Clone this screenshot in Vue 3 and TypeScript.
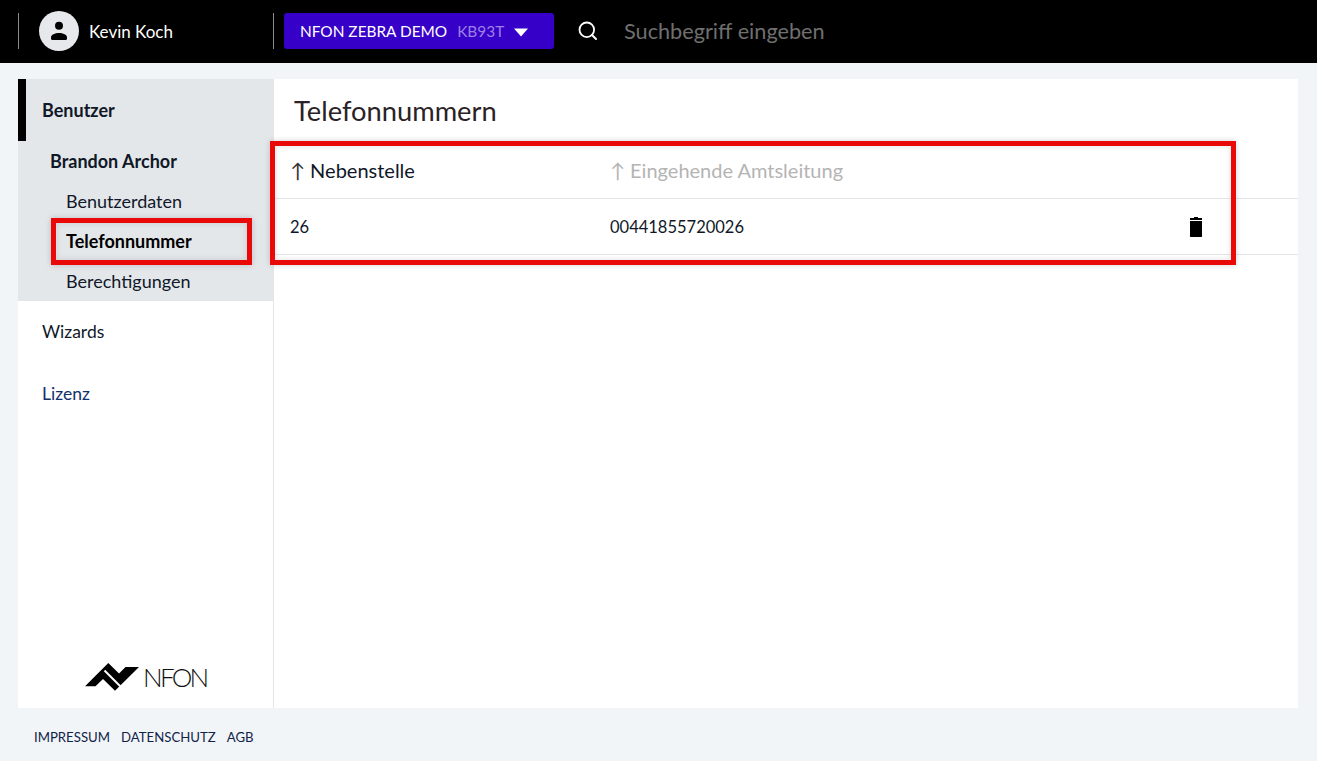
<script setup lang="ts">
const subItems: { label: string; active?: boolean }[] = [
  { label: 'Benutzerdaten' },
  { label: 'Telefonnummer', active: true },
  { label: 'Berechtigungen' },
]
const footerLinks: string[] = ['IMPRESSUM', 'DATENSCHUTZ', 'AGB']
</script>

<template>
  <div class="page">
    <header class="topbar">
      <div class="divider first"></div>
      <div class="avatar">
        <svg viewBox="0 0 24 24" width="24" height="24"><circle cx="12" cy="6.800" r="4" fill="#000"/><path fill="#000" d="M4 19.500v-1c0-3 4-4.500 8-4.500s8 1.500 8 4.500v1a1.500 1.500 0 0 1-1.500 1.500h-13A1.500 1.500 0 0 1 4 19.500z"/></svg>
      </div>
      <span class="username">Kevin Koch</span>
      <div class="divider second"></div>
      <button class="tenant">
        <span class="tenant-name">NFON ZEBRA DEMO</span>
        <span class="tenant-code">KB93T</span>
        <svg class="caret" viewBox="0 0 14 9" width="14" height="9"><path fill="#fff" d="M0 0.500h14L7 8.500z"/></svg>
      </button>
      <svg class="search" viewBox="0 0 20 20" width="20" height="20"><circle cx="8.800" cy="8.800" r="7.300" fill="none" stroke="#fff" stroke-width="1.800"/><path d="M14 14l4 4" stroke="#fff" stroke-width="2" stroke-linecap="round"/></svg>
      <span class="search-text">Suchbegriff eingeben</span>
    </header>

    <main class="panel">
      <aside class="sidebar">
        <div class="section">
          <div class="nav-top active">Benutzer</div>
          <div class="nav-user">Brandon Archor</div>
          <div v-for="item in subItems" :key="item.label" class="nav-sub" :class="{ on: item.active }">{{ item.label }}</div>
        </div>
        <div class="nav-top">Wizards</div>
        <div class="nav-top lizenz">Lizenz</div>
        <div class="logo">
          <svg viewBox="0 0 54 28" width="54" height="28">
            <path fill="#000" d="M0 23.300L23.300 0 34 10.500 40.500 4H54L30 27.700 18 16 10.500 23.300z"/>
            <path d="M19.500 7.500L35.500 23.500" stroke="#fff" stroke-width="2"/>
          </svg>
          <span class="logo-text">NFON</span>
        </div>
      </aside>
      <section class="content">
        <h1 class="title">Telefonnummern</h1>
        <div class="row head">
          <div class="col c1"><span class="arrow">↑</span> Nebenstelle</div>
          <div class="col c2"><span class="arrow">↑</span> Eingehende Amtsleitung</div>
        </div>
        <div class="row body">
          <div class="col c1">26</div>
          <div class="col c2">00441855720026</div>
          <svg class="trash" viewBox="0 0 12 20" width="12" height="20"><path fill="#000" d="M4 0h4v1h4v2H0V1h4zM0 4h12v15.500l-.5.5H.5l-.5-.5z"/></svg>
        </div>
      </section>
    </main>

    <footer class="footer">
      <span v-for="link in footerLinks" :key="link">{{ link }}</span>
    </footer>

    <div class="mark mark-a"></div>
    <div class="mark mark-b"></div>
  </div>
</template>

<style>
html, body { margin: 0; background: #f1f5f8; }
</style>

<style scoped>
.page {
  position: relative;
  width: 1317px;
  height: 761px;
  overflow: hidden;
  background: #f1f5f8;
  font-family: Lato, "Open Sans", sans-serif;
  color: #101828;
  display: flex;
  flex-direction: column;
}
.topbar {
  height: 63px;
  flex: none;
  box-sizing: border-box;
  padding-bottom: 1px;
  background: #000;
  display: flex;
  align-items: center;
  color: #fff;
}
.divider { width: 1px; height: 36px; background: #8a8a8a; }
.first { margin-left: 18px; }
.avatar {
  width: 40px;
  height: 40px;
  border-radius: 50%;
  background: #e6e8eb;
  display: flex;
  align-items: center;
  justify-content: center;
  margin-left: 20px;
}
.username { margin-left: 10px; font-size: 17px; width: 184px; }
.tenant {
  margin-left: 10px;
  width: 270px;
  height: 36px;
  border: 0;
  border-radius: 3px;
  background: #3700c8;
  color: #fff;
  font: inherit;
  font-size: 15.400px;
  display: flex;
  align-items: center;
  padding: 0 0 0 16px;
}
.tenant-code { margin-left: 10px; color: #9d80e6; }
.caret { margin-left: 10px; margin-top: 3px; }
.search { margin-left: 24px; }
.search-text { margin-left: 26px; font-size: 21.700px; color: #6f6f6f; }
.panel {
  margin: 16px 19px 0 18px;
  height: 629px;
  flex: none;
  background: #fff;
  display: flex;
}
.sidebar {
  width: 255px;
  border-right: 1px solid #e3e5e8;
  display: flex;
  flex-direction: column;
  flex: none;
}
.section { background: #e4e7ea; height: 222px; margin-right: -1px; }
.nav-top {
  height: 62px;
  line-height: 62px;
  padding-left: 24px;
  font-size: 17.500px;
}
.nav-top.active { font-size: 18px; font-weight: 700; border-left: 8px solid #000; padding-left: 16px; box-sizing: border-box; }
.lizenz { color: #12306e; }
.nav-user { height: 40px; line-height: 40px; padding-left: 32px; font-weight: 700; font-size: 18px; }
.nav-sub { height: 40px; line-height: 40px; padding-left: 48px; font-size: 18px; }
.nav-sub.on { font-weight: 700; color: #000; }
.logo { margin-top: auto; display: flex; align-items: center; justify-content: flex-start; gap: 4px; padding: 0 0 15px 67px; }
.logo-text { font-size: 26px; font-weight: 300; color: #111; letter-spacing: -2.700px; }
.content { flex: 1; min-width: 0; }
.title { margin: 0; height: 63px; line-height: 63px; padding-left: 20px; font-size: 27.300px; font-weight: 400; color: #2a2226; }
.row { display: flex; align-items: center; position: relative; border-bottom: 1px solid #e3e5e8; box-sizing: border-box; }
.head { height: 57px; font-size: 20px; }
.body { height: 56px; font-size: 16.500px; }
.col { flex: none; }
.c1 { width: 336px; padding-left: 16px; box-sizing: border-box; }
.head .c2 { color: #b4b4b4; }
.arrow { color: #333; }
.head .c2 .arrow { color: #b4b4b4; }
.trash { position: absolute; left: 916px; top: 18px; }
.footer {
  height: 53px;
  flex: none;
  box-sizing: border-box;
  padding: 5px 0 0 34px;
  display: flex;
  align-items: center;
  gap: 11px;
  font-size: 13.200px;
  color: #12234a;
}
.mark { position: absolute; box-sizing: border-box; border: 5px solid #e90909; box-shadow: 0 0 6px rgba(0,0,0,.18), inset 0 0 6px rgba(0,0,0,.12); }
.mark-a { left: 51px; top: 218px; width: 201px; height: 47px; }
.mark-b { left: 270px; top: 141px; width: 966px; height: 124px; }
</style>
